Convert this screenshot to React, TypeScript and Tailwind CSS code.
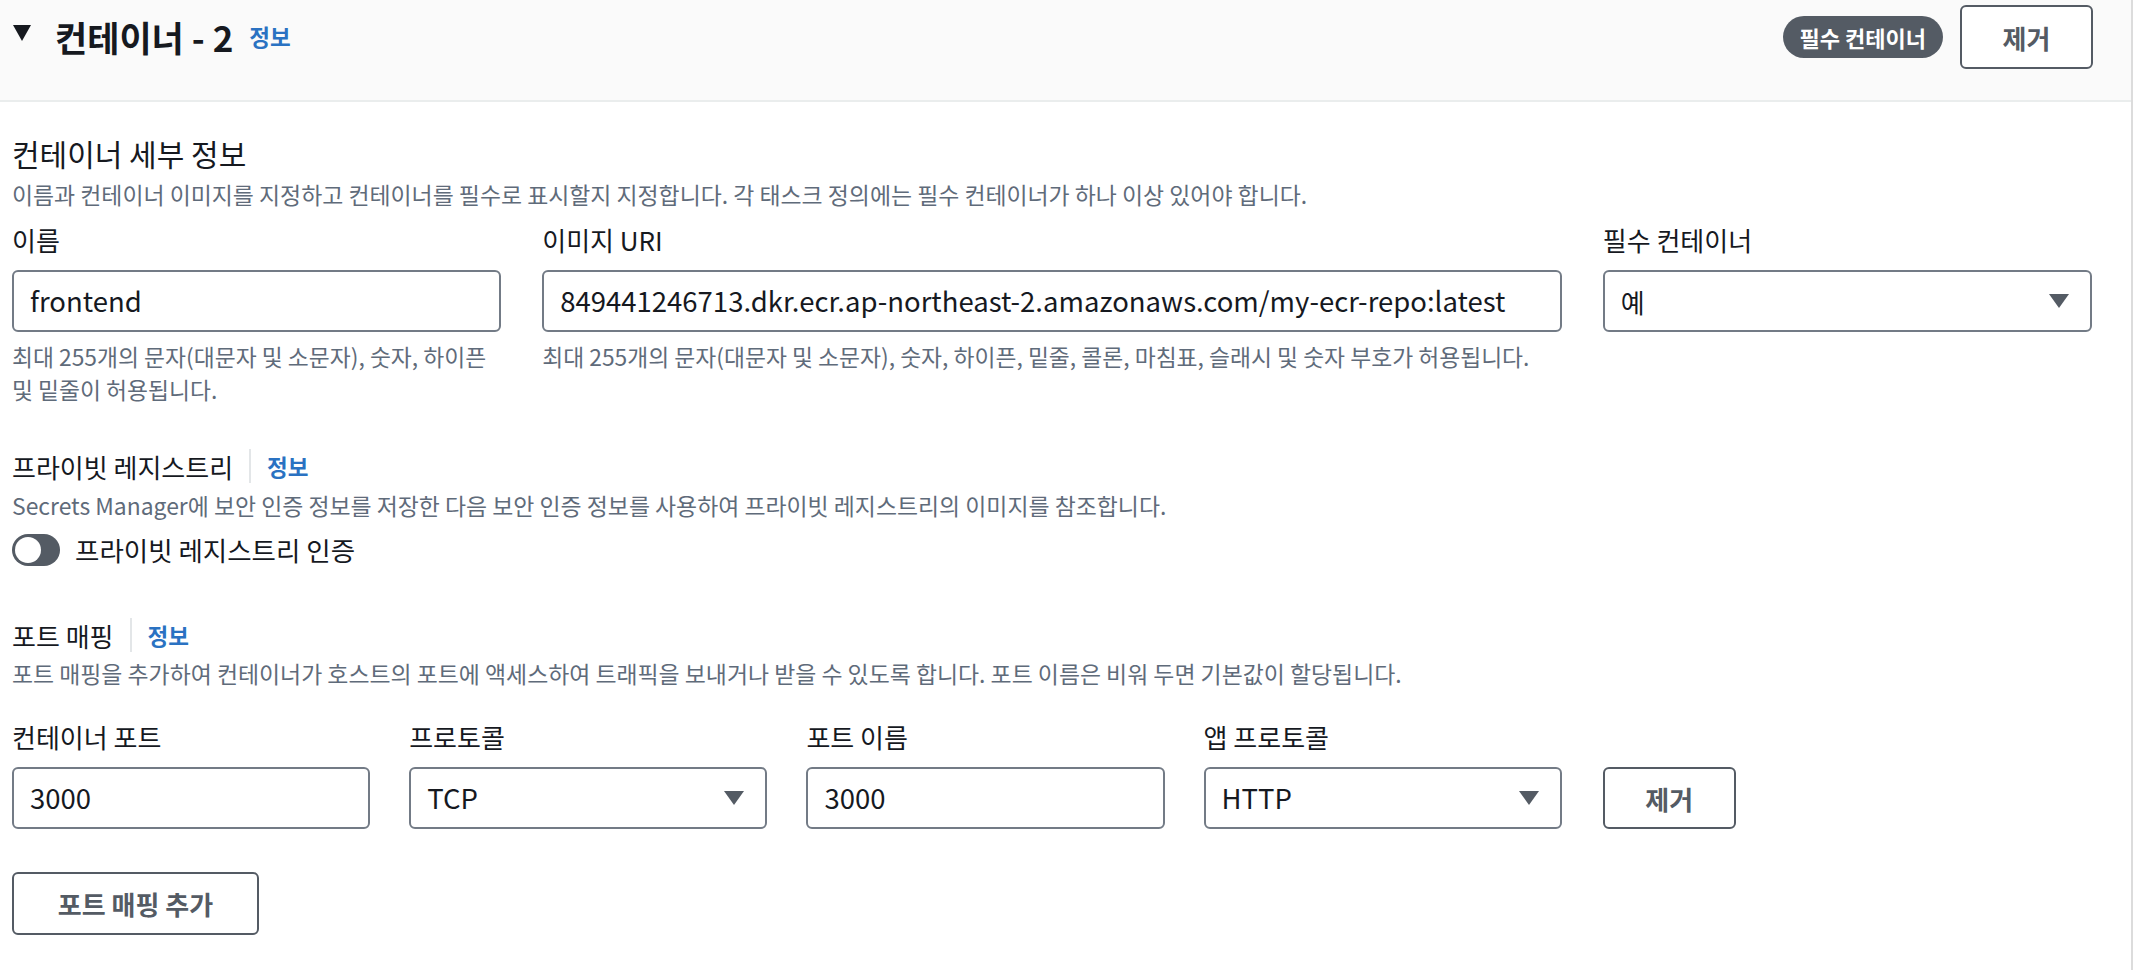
import React from "react";

const FONT = '"Noto Sans CJK KR", "Noto Sans", sans-serif';

const Caret = () => (
    <svg width="22" height="16" viewBox="0 0 22 16">
        <polygon points="1,1 21,1 11,15" fill="#545b64" />
    </svg>
);

const InfoLink = () => (
    <span className="text-[22.5px] font-bold text-[#2a72c2] leading-none">정보</span>
);

const TextInput = ({ value }: { value: string }) => (
    <div className="h-[62px] w-full rounded-[6px] border-2 border-[#737b86] bg-white px-[16px] flex items-center text-[27.5px] text-[#16191f] whitespace-nowrap overflow-hidden">
        {value}
    </div>
);

const SelectBox = ({ value, small }: { value: string; small?: boolean }) => (
    <div className="h-[62px] w-full rounded-[6px] border-2 border-[#737b86] bg-white pl-[16px] pr-[20px] flex items-center justify-between text-[#16191f]">
        <span className={small ? "text-[26px]" : "text-[27.5px]"}>{value}</span>
        <Caret />
    </div>
);

const Label = ({ children }: { children: React.ReactNode }) => (
    <div className="text-[26px] leading-[36px] text-[#16191f]">{children}</div>
);

const SectionTitle = ({ children }: { children: React.ReactNode }) => (
    <div className="flex items-center h-[36px]">
        <span className="text-[26px] text-[#16191f]">{children}</span>
        <span className="mx-[16px] h-[34px] w-[2px] bg-[#e3e6e8]" />
        <InfoLink />
    </div>
);

const Hint = ({ children }: { children: React.ReactNode }) => (
    <div className="text-[22.8px] leading-[33px] text-[#5f6b7a]">{children}</div>
);

const Description = ({ children }: { children: React.ReactNode }) => (
    <div className="text-[22.9px] leading-[32px] text-[#5f6b7a]">{children}</div>
);

export default function App() {
    return (
        <div className="w-[2140px] h-[970px] flex bg-white overflow-hidden" style={{ fontFamily: FONT }}>
            <div className="w-[2133px] h-full border-r-2 border-[#dcdcdc] flex flex-col">
                {/* header */}
                <div className="h-[102px] bg-[#fafafa] border-b-2 border-[#eaeded] pl-[13px] pr-[38px] pt-[5px]">
                    <div className="h-[64px] flex items-center">
                        <svg width="18" height="16" viewBox="0 0 18 16" className="-mt-[8px]">
                            <polygon points="0,0 18,0 9,16" fill="#16191f" />
                        </svg>
                        <span className="ml-[24px] text-[35px] font-bold text-[#16191f]">컨테이너 - 2</span>
                        <span className="ml-[16px] mt-[2px]"><InfoLink /></span>
                        <div className="ml-auto flex items-center gap-[17px]">
                            <span className="h-[42px] px-[17px] rounded-full bg-[#545b64] text-white text-[22px] font-bold flex items-center">필수 컨테이너</span>
                            <button className="h-[64px] w-[133px] rounded-[6px] border-2 border-[#545b64] bg-white text-[26px] font-bold text-[#545b64]">제거</button>
                        </div>
                    </div>
                </div>

                {/* body */}
                <div className="pl-[12px] pr-[39px] pt-[31px] flex flex-col">
                    <div className="text-[30px] leading-[40px] text-[#16191f]">컨테이너 세부 정보</div>
                    <div className="mt-[5px]"><Description>이름과 컨테이너 이미지를 지정하고 컨테이너를 필수로 표시할지 지정합니다. 각 태스크 정의에는 필수 컨테이너가 하나 이상 있어야 합니다.</Description></div>

                    <div className="mt-[12px] grid grid-cols-4 gap-x-[41px]">
                        <div className="flex flex-col">
                            <Label>이름</Label>
                            <div className="mt-[12px]"><TextInput value="frontend" /></div>
                            <div className="mt-[8px]"><Hint>최대 255개의 문자(대문자 및 소문자), 숫자, 하이픈 및 밑줄이 허용됩니다.</Hint></div>
                        </div>
                        <div className="col-span-2 flex flex-col">
                            <Label>이미지 URI</Label>
                            <div className="mt-[12px]"><TextInput value="849441246713.dkr.ecr.ap-northeast-2.amazonaws.com/my-ecr-repo:latest" /></div>
                            <div className="mt-[8px]"><Hint>최대 255개의 문자(대문자 및 소문자), 숫자, 하이픈, 밑줄, 콜론, 마침표, 슬래시 및 숫자 부호가 허용됩니다.</Hint></div>
                        </div>
                        <div className="flex flex-col">
                            <Label>필수 컨테이너</Label>
                            <div className="mt-[12px]"><SelectBox value="예" small /></div>
                        </div>
                    </div>

                    {/* private registry */}
                    <div className="mt-[42px]"><SectionTitle>프라이빗 레지스트리</SectionTitle></div>
                    <div className="mt-[5px]"><Description>Secrets Manager에 보안 인증 정보를 저장한 다음 보안 인증 정보를 사용하여 프라이빗 레지스트리의 이미지를 참조합니다.</Description></div>
                    <div className="mt-[11px] h-[36px] flex items-center">
                        <div className="h-[32px] w-[48px] rounded-full bg-[#545b64] flex items-center pl-[3px]">
                            <div className="h-[26px] w-[26px] rounded-full bg-white" />
                        </div>
                        <span className="ml-[15px] text-[26.5px] text-[#16191f]">프라이빗 레지스트리 인증</span>
                    </div>

                    {/* port mapping */}
                    <div className="mt-[49px]"><SectionTitle>포트 매핑</SectionTitle></div>
                    <div className="mt-[4px]"><Description>포트 매핑을 추가하여 컨테이너가 호스트의 포트에 액세스하여 트래픽을 보내거나 받을 수 있도록 합니다. 포트 이름은 비워 두면 기본값이 할당됩니다.</Description></div>

                    <div className="mt-[30px] grid grid-cols-4 gap-x-[41px]">
                        <div className="col-span-3 grid grid-cols-4 gap-x-[39px]">
                            <div className="flex flex-col">
                                <Label>컨테이너 포트</Label>
                                <div className="mt-[12px]"><TextInput value="3000" /></div>
                            </div>
                            <div className="flex flex-col">
                                <Label>프로토콜</Label>
                                <div className="mt-[12px]"><SelectBox value="TCP" /></div>
                            </div>
                            <div className="flex flex-col">
                                <Label>포트 이름</Label>
                                <div className="mt-[12px]"><TextInput value="3000" /></div>
                            </div>
                            <div className="flex flex-col">
                                <Label>앱 프로토콜</Label>
                                <div className="mt-[12px]"><SelectBox value="HTTP" /></div>
                            </div>
                        </div>
                        <div className="flex items-end">
                            <button className="h-[62px] w-[133px] rounded-[6px] border-2 border-[#545b64] bg-white text-[26px] font-bold text-[#545b64]">제거</button>
                        </div>
                    </div>

                    <div className="mt-[43px]">
                        <button className="h-[63px] w-[247px] rounded-[6px] border-2 border-[#545b64] bg-white text-[26px] font-bold text-[#545b64]">포트 매핑 추가</button>
                    </div>
                </div>
            </div>
            <div className="flex-1 bg-white" />
        </div>
    );
}
